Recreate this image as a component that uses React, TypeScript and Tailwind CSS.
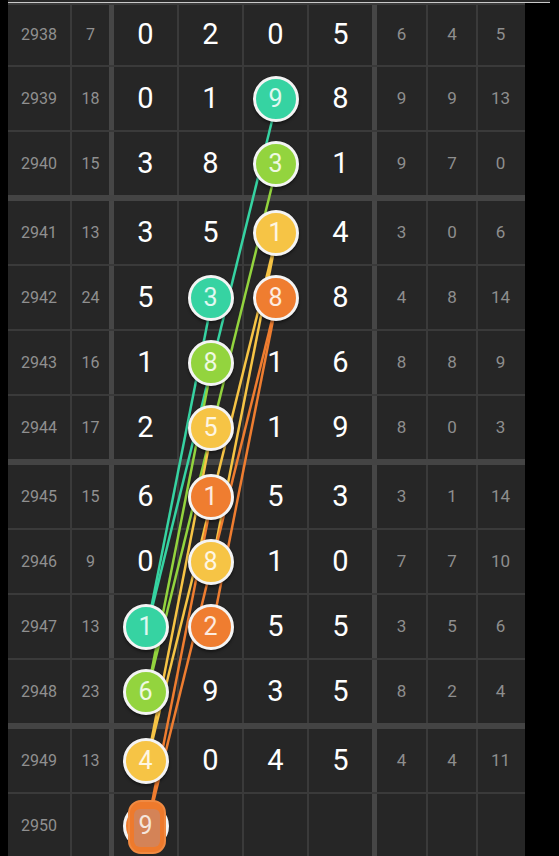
import React from 'react'

type Tone = 'teal' | 'lime' | 'yellow' | 'orange'
type Cell = { v: string; c?: Tone; odd?: boolean }
type Row = { no: string; sum: string; digits: Cell[]; tail: string[]; sep: 'thin' | 'thick' | 'none'; h: string }

const tone: Record<Tone, string> = {
  teal: 'bg-[#36d3a2]',
  lime: 'bg-[#93d43e]',
  yellow: 'bg-[#f6c445]',
  orange: 'bg-[#ef7d30]',
}

const stroke: Record<Tone, string> = {
  teal: '#36d3a2',
  lime: '#93d43e',
  yellow: '#f6c445',
  orange: '#ef7d30',
}

const d = (s: string): Cell[] =>
  s.split(' ').map(t => {
    const [v, k] = t.split(':')
    const map: Record<string, Tone> = { t: 'teal', l: 'lime', y: 'yellow', o: 'orange' }
    return { v, c: k ? map[k] : undefined }
  })

const rows: Row[] = [
  { no: '2938', sum: '7', digits: d('0 2 0 5'), tail: ['6', '4', '5'], sep: 'thin', h: 'h-[60px]' },
  { no: '2939', sum: '18', digits: d('0 1 9:t 8'), tail: ['9', '9', '13'], sep: 'thin', h: 'h-[63px]' },
  { no: '2940', sum: '15', digits: d('3 8 3:l 1'), tail: ['9', '7', '0'], sep: 'thick', h: 'h-[63px]' },
  { no: '2941', sum: '13', digits: d('3 5 1:y 4'), tail: ['3', '0', '6'], sep: 'thin', h: 'h-[63px]' },
  { no: '2942', sum: '24', digits: d('5 3:t 8:o 8'), tail: ['4', '8', '14'], sep: 'thin', h: 'h-[63px]' },
  { no: '2943', sum: '16', digits: d('1 8:l 1 6'), tail: ['8', '8', '9'], sep: 'thin', h: 'h-[63px]' },
  { no: '2944', sum: '17', digits: d('2 5:y 1 9'), tail: ['8', '0', '3'], sep: 'thick', h: 'h-[63px]' },
  { no: '2945', sum: '15', digits: d('6 1:o 5 3'), tail: ['3', '1', '14'], sep: 'thin', h: 'h-[63px]' },
  { no: '2946', sum: '9', digits: d('0 8:y 1 0'), tail: ['7', '7', '10'], sep: 'thin', h: 'h-[63px]' },
  { no: '2947', sum: '13', digits: d('1:t 2:o 5 5'), tail: ['3', '5', '6'], sep: 'thin', h: 'h-[63px]' },
  { no: '2948', sum: '23', digits: d('6:l 9 3 5'), tail: ['8', '2', '4'], sep: 'thick', h: 'h-[63px]' },
  { no: '2949', sum: '13', digits: d('4:y 0 4 5'), tail: ['4', '4', '11'], sep: 'thin', h: 'h-[63px]' },
  { no: '2950', sum: '', digits: [{ v: '9', c: 'orange', odd: true }, { v: '' }, { v: '' }, { v: '' }], tail: ['', '', ''], sep: 'none', h: 'h-[63px]' },
]

// column centres / row centres used by the trend lines
const cx = [147.5, 212.5, 277.5]
const cy: Record<string, number> = {
  '2939': 98.5, '2940': 163.5, '2941': 232.5, '2942': 297.5, '2943': 362.5, '2944': 427.5,
  '2945': 496.5, '2946': 561.5, '2947': 626.5, '2948': 691.5, '2949': 760.5, '2950': 825.5,
}

const lines: [Tone, number, string, number, string][] = [
  ['teal', 2, '2939', 0, '2947'],
  ['teal', 1, '2942', 0, '2947'],
  ['lime', 2, '2940', 0, '2948'],
  ['lime', 1, '2943', 0, '2948'],
  ['yellow', 2, '2941', 0, '2949'],
  ['yellow', 1, '2944', 0, '2949'],
  ['yellow', 2, '2941', 1, '2946'],
  ['orange', 2, '2942', 0, '2950'],
  ['orange', 1, '2945', 0, '2950'],
  ['orange', 2, '2942', 1, '2947'],
]

const font = { fontFamily: 'Roboto, "Noto Sans", sans-serif' }

export default function App() {
  return (
    <div className="relative w-[559px] h-[856px] overflow-hidden bg-black" style={font}>
      <div className="ml-2 w-[542px] h-[2px] bg-[#2a2a2a]" />
      <div className="ml-2 w-[542px] h-px bg-[#c9c9c9]" />
      <div className="ml-2 w-[517px] h-[2px] bg-[#3a3a3a]" />

      <div className="ml-2 w-[517px] bg-[#262626]">
        {rows.map(r => (
          <div key={r.no}
            className={`flex ${r.h} ${r.sep === 'thin' ? 'border-b-2 border-[#3a3a3a]' : r.sep === 'thick' ? 'border-b-[6px] border-[#444444]' : ''} box-content`}>
            <div className="w-[64px] border-r-2 border-[#3a3a3a] flex items-center justify-center text-[16px] text-[#909090]">
              {r.no}
            </div>
            <div className="w-[37px] border-r-[5px] border-[#464646] box-content flex items-center justify-center text-[16px] text-[#909090]">
              {r.sum}
            </div>
            {r.digits.map((c, i) => (
              <div key={i}
                className={`w-[63px] ${i < 3 ? 'border-r-2 border-[#3a3a3a]' : 'border-r-[5px] border-[#464646]'} box-content flex items-center justify-center`}>
                {c.c ? <Ball v={c.v} c={c.c} odd={c.odd} /> : <span className="text-[29px] text-white">{c.v}</span>}
              </div>
            ))}
            {r.tail.map((t, i) => (
              <div key={i}
                className={`${i === 0 ? 'w-[49px]' : i === 1 ? 'w-[48px]' : 'w-[45px]'} ${i < 2 ? 'border-r-2 border-[#3a3a3a]' : ''} box-content flex items-center justify-center text-[17px] text-[#8e8e8e]`}>
                {t}
              </div>
            ))}
          </div>
        ))}
      </div>

      <svg className="absolute inset-0 pointer-events-none" width="559" height="856">
        {lines.map(([t, c1, r1, c2, r2], i) => (
          <line key={i} x1={cx[c1]} y1={cy[r1]} x2={cx[c2]} y2={cy[r2]} stroke={stroke[t]} strokeWidth="2.5" />
        ))}
      </svg>
    </div>
  )
}

function Ball({ v, c, odd }: { v: string; c: Tone; odd?: boolean }) {
  if (odd) {
    return (
      <div className="relative z-10 w-[46px] h-[46px] rounded-full border-[3px] border-[#f4f4f4] bg-[#ef7d30] flex items-center justify-center">
        <div className="absolute -top-[6px] left-[2px] w-[38px] h-[54px] rounded-[13px] bg-[#ee7a2c] border-2 border-[#f08a42]" />
        <div className="absolute top-[3px] left-[8px] w-[26px] h-[38px] rounded-[6px] bg-[#c9876a]/70" />
        <span className="relative text-[25px] leading-none text-[#f4e6dc]">{v}</span>
      </div>
    )
  }
  return (
    <div className={`relative z-10 w-[46px] h-[46px] rounded-full border-[3px] border-[#f4f4f4] ${tone[c]} shadow-[0_2px_3px_rgba(0,0,0,0.45)] flex items-center justify-center`}>
      <span className="text-[25px] leading-none text-white/85">{v}</span>
    </div>
  )
}
